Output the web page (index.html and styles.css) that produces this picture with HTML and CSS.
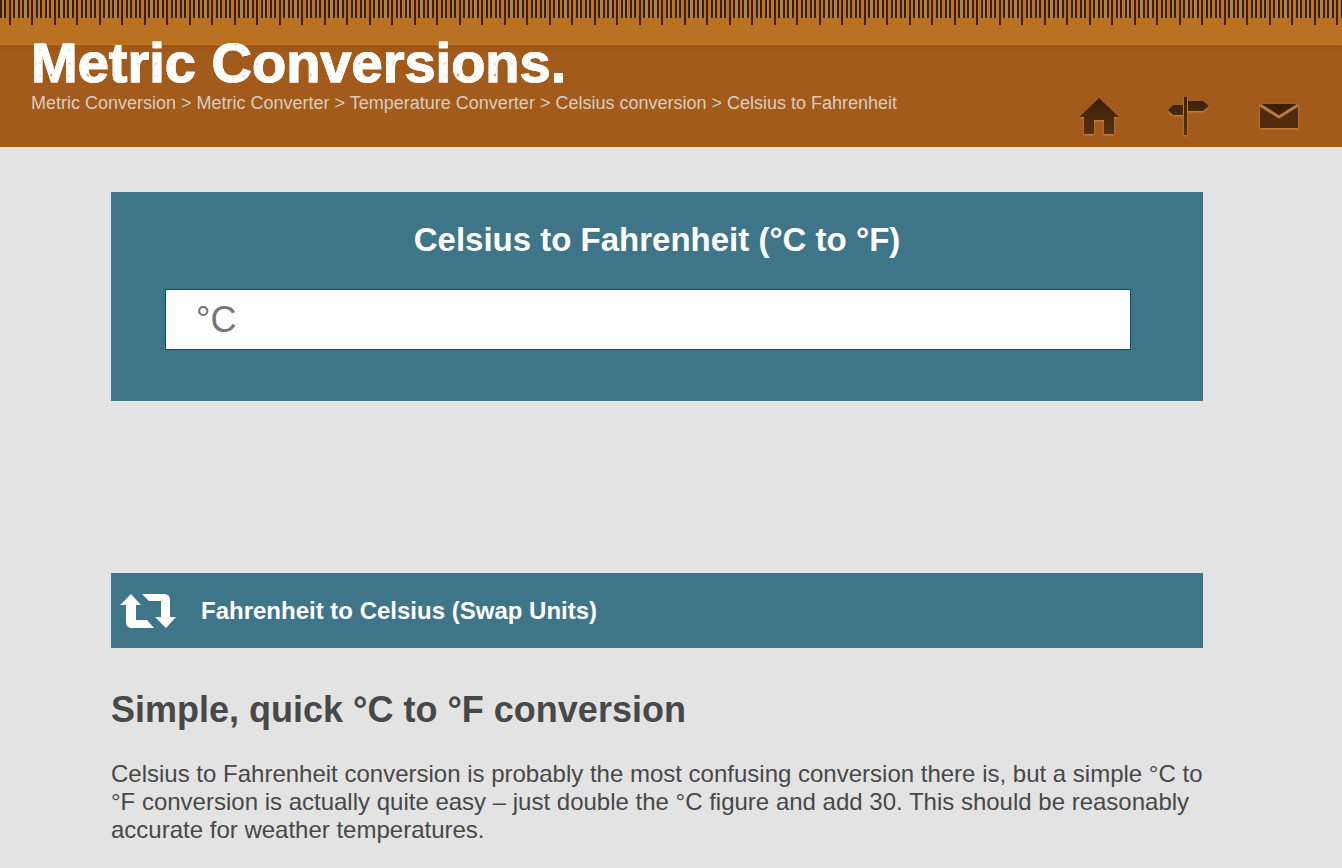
FILE: index.html
```html
<!DOCTYPE html>
<html lang="en">
<head>
    <meta charset="UTF-8">
    <meta name="viewport" content="width=device-width, initial-scale=1.0">
    <title>Celsius to Fahrenheit (°C to °F)</title>
    <link rel="stylesheet" href="styles.css">
</head>
<body>
    <header class="header">
        <div class="brand">
            <a class="logo" href="/">Metric Conversions.</a>
            <nav class="breadcrumb" aria-label="Breadcrumb">
                <a href="/">Metric Conversion</a> &gt;
                <a href="/converter">Metric Converter</a> &gt;
                <a href="/temperature">Temperature Converter</a> &gt;
                <a href="/temperature/celsius">Celsius conversion</a> &gt;
                <a href="/temperature/celsius-to-fahrenheit">Celsius to Fahrenheit</a>
            </nav>
        </div>
        <nav class="icons" aria-label="Site">
            <a href="/" aria-label="Home">
                <svg viewBox="0 0 42 42">
                    <defs>
                        <linearGradient id="carved" x1="0" y1="0" x2="0" y2="1">
                            <stop offset="0" stop-color="#3c1f08"/>
                            <stop offset="1" stop-color="#5a3110"/>
                        </linearGradient>
                    </defs>
                    <path fill="url(#carved)" d="M20 2 L0 21 H5 V38 H15 V24 H25 V38 H35 V21 H40 Z"/>
                </svg>
            </a>
            <a href="/sitemap" aria-label="Site map">
                <svg viewBox="0 0 42 42">
                    <path fill="url(#carved)" d="M15 1 H18 V39 H15 Z M19 5 H34 L40 10 L34 15 H19 Z M14 9 V19 H4 L-1 14 L4 9 Z"/>
                </svg>
            </a>
            <a href="/contact" aria-label="Contact">
                <svg viewBox="0 0 42 42">
                    <path fill="#502b0d" d="M1 8 H39 V32 H1 Z"/>
                    <path fill="#3c1f08" d="M1 8 H39 L20 20 Z"/>
                    <path fill="none" stroke="#bd7a3c" stroke-width="3" d="M1 9 L20 21 L39 9"/>
                </svg>
            </a>
        </nav>
    </header>

    <main class="content">
        <form class="converter">
            <h1><label for="value">Celsius to Fahrenheit (°C to °F)</label></h1>
            <input class="value" id="value" type="text" placeholder="°C">
        </form>

        <a class="swap" href="/temperature/fahrenheit-to-celsius">
            <svg viewBox="0 0 57 36">
                <path d="M11 1 L21 12 H16 V27 H27 L34 35 H12 Q6 35 6 29 V12 H0 Z"/>
                <path d="M22 1 H44 Q50 1 50 7 V24 H56 L46 35 L35 24 H41 V8 H29 Z"/>
            </svg>
            Fahrenheit to Celsius (Swap Units)
        </a>

        <h2>Simple, quick °C to °F conversion</h2>
        <p>Celsius to Fahrenheit conversion is probably the most confusing conversion there is, but a simple °C to °F conversion is actually quite easy – just double the °C figure and add 30. This should be reasonably accurate for weather temperatures.</p>
    </main>
</body>
</html>
```
FILE: styles.css
```css
* {
    box-sizing: border-box;
}

body {
    margin: 0;
    font-family: "Liberation Sans", Arial, sans-serif;
    color: #484848;
    background: #e3e3e3;
}

/* wooden ruler: long ticks, short ticks, then the wood */
.header {
    display: flex;
    justify-content: space-between;
    align-items: flex-start;
    min-height: 147px;
    padding: 33px 41px 0 31px;
    background:
        linear-gradient(90deg,
            transparent 9px, #421b08 9px 11px, transparent 11px 31px,
            #421b08 31px 33px, transparent 33px) 0 0 / 45px 25px repeat-x,
        linear-gradient(90deg,
            #421b08 0 2px, #a8844f 2px 4px,
            #421b08 4px 6px, #b5771f 6px 9px,
            #421b08 9px 11px, #b5771f 11px 13px,
            #421b08 13px 15px, #a8844f 15px 18px,
            #421b08 18px 20px, #b5771f 20px 22px,
            #421b08 22px 24px, #a8844f 24px 27px,
            #421b08 27px 29px, #b5771f 29px 31px,
            #421b08 31px 33px, #b5771f 33px 36px,
            #421b08 36px 38px, #a8844f 38px 40px,
            #421b08 40px 42px, #b5771f 42px 45px) 0 0 / 45px 18px repeat-x,
        linear-gradient(#b87420 0, #b97020 44px, #c27c22 44px, #c27c22 45px, #9c5618 45px, #a25b1a 56px);
}

/* worn white lettering */
.logo {
    display: block;
    font-size: 56px;
    line-height: 60px;
    font-weight: bold;
    text-decoration: none;
    color: transparent;
    -webkit-text-stroke: 1px #fff;
    background:
        radial-gradient(circle at 5px 8px, #c9a07c, transparent 1px) 0 0 / 17px 23px,
        radial-gradient(circle at 9px 4px, #c9a07c, transparent 1px) 0 0 / 29px 13px,
        radial-gradient(circle at 20px 11px, #b98255, transparent 2px) 0 0 / 37px 31px,
        #fff;
    -webkit-background-clip: text;
    background-clip: text;
}

.breadcrumb {
    font-size: 18px;
    line-height: 20px;
    color: #d9cdc2;
}

.breadcrumb a {
    color: inherit;
    text-decoration: none;
}

.icons {
    display: flex;
    gap: 48px;
    padding-top: 63px;
}

.icons svg {
    display: block;
    width: 42px;
    height: 42px;
    overflow: visible;
    filter: drop-shadow(0 1px 1px #d08b4e);
}

.content {
    padding: 45px 139px 24px 111px;
}

.converter {
    height: 209px;
    padding: 26px 72px 0 54px;
    background: #3f7588;
}

.converter h1 {
    margin: 0 0 27px;
    padding-left: 18px;
    font-size: 33px;
    line-height: 44px;
    text-align: center;
    color: #fff;
}

.value {
    display: block;
    width: 100%;
    height: 61px;
    padding: 0 30px;
    font: 36px "Liberation Sans", Arial, sans-serif;
    border: 1px solid #114b60;
    border-radius: 0;
    background: #fff;
}

.value::placeholder {
    color: #757575;
}

.swap {
    display: flex;
    align-items: center;
    gap: 24px;
    min-height: 75px;
    margin-top: 172px;
    padding-left: 9px;
    font-size: 24px;
    font-weight: bold;
    color: #fff;
    text-decoration: none;
    background: #3f7588;
}

.swap svg {
    width: 57px;
    height: 36px;
    fill: #fff;
}

h2 {
    margin: 40px 0 28px;
    font-size: 36px;
    line-height: 44px;
}

p {
    margin: 0;
    font-size: 24px;
    line-height: 28px;
}
```
